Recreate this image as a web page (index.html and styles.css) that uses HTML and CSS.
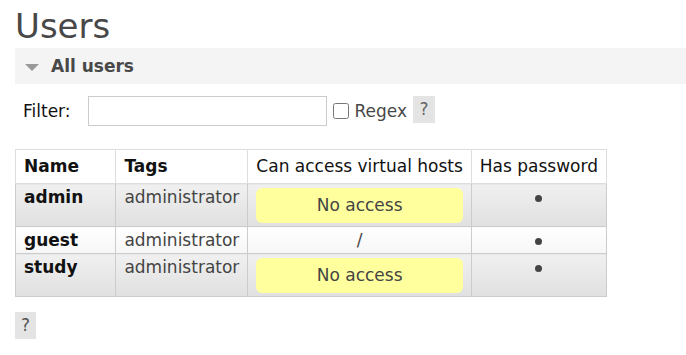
FILE: index.html
```html
<!DOCTYPE html>
<html>
<head>
	<title>Users</title>
	<link rel="stylesheet" href="styles.css">
</head>
<body>

<h1>Users</h1>

<div class="section">
	<h2><span class="arrow"></span>All users</h2>
	<div class="hider">
		<div class="filter">
			<label for="filter">Filter:</label>
			<input type="text" id="filter" class="filter-input">
			<input type="checkbox" id="regex" class="regex-box">
			<label for="regex" class="regex-label">Regex</label>
			<span class="help">?</span>
		</div>

		<table class="list">
			<thead>
				<tr>
					<th class="sort">Name</th>
					<th class="sort">Tags</th>
					<th>Can access virtual hosts</th>
					<th>Has password</th>
				</tr>
			</thead>
			<tbody>
				<tr class="alt1">
					<td class="name">admin</td>
					<td class="tags">administrator</td>
					<td class="vhosts"><div class="warning">No access</div></td>
					<td class="pw"><span class="dot"></span></td>
				</tr>
				<tr class="alt2">
					<td class="name">guest</td>
					<td class="tags">administrator</td>
					<td class="vhosts">/</td>
					<td class="pw"><span class="dot"></span></td>
				</tr>
				<tr class="alt1">
					<td class="name">study</td>
					<td class="tags">administrator</td>
					<td class="vhosts"><div class="warning">No access</div></td>
					<td class="pw"><span class="dot"></span></td>
				</tr>
			</tbody>
		</table>

		<span class="help bottom">?</span>
	</div>
</div>

</body>
</html>
```

FILE: styles.css
```css
body {
	margin: 0;
	padding: 0 0 0 15px;
	font-family: "DejaVu Sans", Verdana, sans-serif;
	font-size: 17px;
	color: #222;
	background: #fff;
}

h1 {
	margin: 0;
	padding: 4px 0 0 0;
	font-size: 34px;
	font-weight: normal;
	line-height: 44px;
	color: #484848;
}

.section h2 {
	margin: 0;
	height: 36px;
	display: flex;
	align-items: center;
	padding-left: 10px;
	font-size: 17px;
	font-weight: bold;
	color: #484848;
	background: #f4f4f4;
}

.arrow {
	width: 0;
	height: 0;
	border-left: 7px solid transparent;
	border-right: 7px solid transparent;
	border-top: 7px solid #999;
	margin-right: 12px;
	margin-top: 2px;
}

.filter {
	display: flex;
	align-items: center;
	margin: 12px 0 0 8px;
	height: 30px;
	color: #111;
}

.filter-input {
	width: 239px;
	height: 30px;
	box-sizing: border-box;
	border: 1px solid #ccc;
	margin: 0 0 0 17px;
	padding: 0 4px;
	font-family: inherit;
}

.regex-box {
	width: 16px;
	height: 16px;
	margin: 0 0 0 6px;
}

.regex-label {
	margin-left: 6px;
	color: #484848;
}

.help {
	display: inline-block;
	width: 22px;
	height: 27px;
	line-height: 27px;
	text-align: center;
	background: #e4e4e4;
	color: #666;
	margin-left: 6px;
	margin-top: -3px;
}

.help.bottom {
	width: 21px;
	margin: 15px 0 0 0;
	color: #555;
}

table.list {
	border-collapse: collapse;
	margin-top: 23px;
	width: 592px;
	border: 1px solid #ddd;
}

table.list th {
	font-weight: normal;
	text-align: left;
	padding: 7px 8px 7px 8px;
	line-height: 19px;
	color: #111;
	border: 1px solid #ddd;
	background: #fff;
	white-space: nowrap;
}

table.list th.sort {
	font-weight: bold;
}

table.list th:nth-child(1) { width: 84px; }
table.list th:nth-child(2) { width: 114px; }

table.list td {
	padding: 4px 8px 3px 8px;
	line-height: 19px;
	vertical-align: top;
	border: 1px solid #ccc;
	border-top-color: #d4d4d4;
	white-space: nowrap;
}

tr.alt1 td {
	background: linear-gradient(#f0f0f0, #e0e0e0);
}

tr.alt2 td {
	background: linear-gradient(#fff, #f6f6f6);
}

td.name {
	font-weight: bold;
	color: #111;
}

td.tags {
	color: #444;
}

td.vhosts {
	text-align: center;
	color: #444;
}

td.pw {
	text-align: center;
}

.dot {
	display: inline-block;
	width: 7px;
	height: 7px;
	border-radius: 50%;
	background: #444;
	margin-bottom: 1px;
}

.warning {
	background: #ffff9e;
	border-radius: 6px;
	height: 35px;
	line-height: 35px;
	color: #444;
}
```
